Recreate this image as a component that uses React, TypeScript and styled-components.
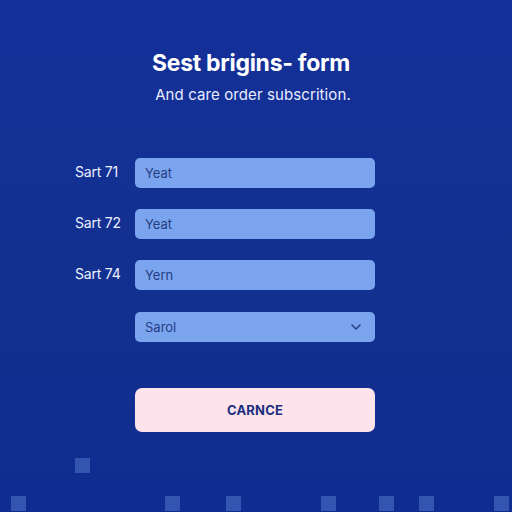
import React from "react";
import styled, { createGlobalStyle } from "styled-components";

const Global = createGlobalStyle`
  html, body { margin: 0; padding: 0; }
  body { font-family: Inter, "Liberation Sans", Arial, sans-serif; }
`;

const Page = styled.div`
  position: relative;
  width: 512px;
  height: 512px;
  overflow: hidden;
  background: linear-gradient(180deg, #14309a 0%, #12308e 60%, #0f2c92 100%);
  display: flex;
  flex-direction: column;
  align-items: center;
  box-sizing: border-box;
  padding-top: 48px;
`;

const Title = styled.h1`
  margin: 0;
  font-size: 23px;
  line-height: 30px;
  font-weight: 700;
  color: #ffffff;
  letter-spacing: -0.3px;
  margin-left: -10px;
`;

const Subtitle = styled.p`
  margin: 7px 0 0;
  font-size: 15px;
  line-height: 20px;
  color: #e8ecff;
  letter-spacing: 0.1px;
  margin-left: -6px;
`;

const Form = styled.div`
  margin-top: 53px;
  display: grid;
  grid-template-columns: 60px 240px;
  row-gap: 21px;
  align-items: center;
  align-self: flex-start;
  margin-left: 75px;
`;

const Label = styled.span`
  font-size: 14px;
  color: #eef1ff;
  letter-spacing: -0.2px;
  align-self: start;
  padding-top: 5px;
`;

const Field = styled.div<{ $select?: boolean }>`
  grid-column: 2;
  height: 30px;
  border-radius: 5px;
  background: #7ba4ee;
  display: flex;
  align-items: center;
  justify-content: space-between;
  padding: 0 14px 0 10px;
  box-sizing: border-box;
  font-size: 13px;
  color: #263d82;
  margin-top: ${(p) => (p.$select ? "1px" : "0")};
`;

const Spacer = styled.div`
  grid-column: 1;
`;

const Button = styled.button`
  margin-top: 46px;
  align-self: flex-start;
  margin-left: 135px;
  width: 240px;
  height: 44px;
  border: none;
  border-radius: 7px;
  background: #fde3ec;
  color: #1b2f80;
  font-family: inherit;
  font-weight: 700;
  font-size: 13px;
  letter-spacing: 0.2px;
`;

const Square = styled.div`
  position: absolute;
  width: 15px;
  height: 15px;
  background: #3a5cb4;
  opacity: 0.85;
`;

const squares: [number, number][] = [
  [75, 458],
  [11, 496],
  [165, 496],
  [226, 496],
  [321, 496],
  [379, 496],
  [419, 496],
  [494, 496],
];

export default function App() {
  return (
    <>
      <Global />
      <Page>
        <Title>Sest brigins- form</Title>
        <Subtitle>And care order subscrition.</Subtitle>
        <Form>
          <Label>Sart 71</Label>
          <Field>Yeat</Field>
          <Label>Sart 72</Label>
          <Field>Yeat</Field>
          <Label>Sart 74</Label>
          <Field>Yern</Field>
          <Spacer />
          <Field $select>
            <span>Sarol</span>
            <svg width="10" height="6" viewBox="0 0 10 6" fill="none">
              <path d="M1 1 L5 5 L9 1" stroke="#263d82" strokeWidth="1.5" strokeLinecap="round" strokeLinejoin="round" />
            </svg>
          </Field>
        </Form>
        <Button>CARNCE</Button>
        {squares.map(([x, y], i) => (
          <Square key={i} style={{ left: x, top: y }} />
        ))}
      </Page>
    </>
  );
}
